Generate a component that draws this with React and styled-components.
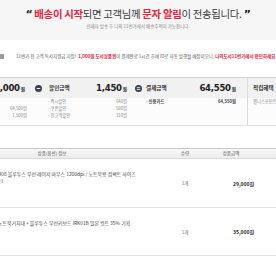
import React from "react";
import styled, { createGlobalStyle } from "styled-components";

const GlobalStyle = createGlobalStyle`
  html, body {
    margin: 0;
    padding: 0;
    background: #fff;
    overflow: hidden;
  }
  body {
    width: 276px;
    height: 260px;
    font-family: "Noto Sans CJK KR", "Noto Sans", sans-serif;
    color: #333;
  }
`;

const red = "#e4243c";
const navy = "#3b3f52";

const Banner = styled.div`
  height: 40px;
  box-sizing: border-box;
  padding-top: 8px;
  background: #f6f6f6;
  text-align: center;
  white-space: nowrap;
`;

const Headline = styled.p`
  margin: 0;
  font-size: 10.4px;
  line-height: 12px;
  letter-spacing: -0.3px;
  color: #3a3a3a;
`;

const Quote = styled.span`
  font-family: "DejaVu Sans", sans-serif;
  font-weight: 700;
  font-size: 11px;
  color: #222;
`;

const Red = styled.strong`
  color: ${red};
  font-weight: 700;
`;

const SubText = styled.p`
  margin: 2px 0 0;
  font-size: 4.5px;
  line-height: 6px;
  color: #888;
`;

const Page = styled.div`
  margin-left: -58px;
  width: 400px;
`;

const Notice = styled.div`
  margin-top: 12px;
  padding-left: 58px;
  display: flex;
  align-items: center;
  gap: 12px;
  height: 8px;
  font-size: 4.5px;
  line-height: 8px;
  color: #555;
  white-space: nowrap;
`;

const NoticeIcon = styled.span`
  width: 4px;
  height: 5px;
  background: #9a9a9a;
  border-radius: 0.5px;
`;

const Summary = styled.div`
  margin-top: 17px;
  display: grid;
  grid-template-columns: 90px 13px 87px 12px 103px 95px;
  grid-template-rows: 20px 27px;
  border-top: 1px solid #d4d4d4;
  border-bottom: 1px solid #e2e2e2;
`;

const Head = styled.div`
  background: #f1f1f1;
  display: flex;
  align-items: center;
  justify-content: ${({ $end }) => ($end ? "flex-end" : "space-between")};
  padding: 0 ${({ $pr = 0 }) => $pr}px 0 ${({ $pl = 0 }) => $pl}px;
  border-left: ${({ $divider }) => ($divider ? "1px solid #dcdcdc" : "none")};
`;

const IconCell = styled.div`
  background: #f1f1f1;
  display: flex;
  align-items: center;
  justify-content: center;
`;

const Label = styled.span`
  font-size: 5.6px;
  font-weight: 700;
  color: #333;
`;

const Amount = styled.span`
  font-family: "DejaVu Sans", sans-serif;
  font-weight: 700;
  font-size: 8.6px;
  letter-spacing: -0.3px;
  color: #222;
  small {
    font-family: "Noto Sans CJK KR", sans-serif;
    font-size: 4.6px;
    margin-left: 1px;
    letter-spacing: 0;
  }
`;

const Detail = styled.div`
  background: #fcfcfc;
  padding: 0 ${({ $pr = 0 }) => $pr}px 0 ${({ $pl = 0 }) => $pl}px;
  border-left: ${({ $divider }) => ($divider ? "1px solid #dcdcdc" : "none")};
`;

const DetailRow = styled.div`
  display: flex;
  justify-content: space-between;
  font-size: 4.3px;
  line-height: 7px;
  color: #888;
  white-space: nowrap;
  b {
    font-weight: 700;
    color: #444;
  }
`;

const Table = styled.div`
  margin-top: 22px;
`;

const TRow = styled.div`
  display: grid;
  grid-template-columns: 220px 46px 46px 88px;
  height: ${({ $h }) => $h}px;
  border-bottom: 1px solid #e4e4e4;
`;

const THead = styled(TRow)`
  border-top: 1px solid #c8c8c8;
  border-bottom-color: #d8d8d8;
  background: linear-gradient(#f8f8f8, #ececec);
`;

const Th = styled.div`
  font-size: 4.5px;
  line-height: 9px;
  color: #555;
  text-align: center;
`;

const ProductCell = styled.div`
  padding: 11px 0 0 38px;
  font-size: 4.9px;
  line-height: 7px;
  color: #444;
  white-space: nowrap;
`;

const Qty = styled.div`
  align-self: center;
  text-align: center;
  font-size: 4.5px;
  color: #666;
`;

const Price = styled.div`
  align-self: center;
  text-align: right;
  font-size: 5px;
  font-weight: 700;
  color: #222;
`;

function CircleIcon({ equals }) {
  return (
    <svg width="7" height="7" viewBox="0 0 14 14">
      <circle cx="7" cy="7" r="7" fill={navy} />
      {equals ? (
        <>
          <rect x="3.5" y="4.6" width="7" height="1.6" fill="#fff" />
          <rect x="3.5" y="7.8" width="7" height="1.6" fill="#fff" />
        </>
      ) : (
        <rect x="3.5" y="6.1" width="7" height="1.8" fill="#fff" />
      )}
    </svg>
  );
}

const products = [
  { name: "로지텍 M408 블루투스 무선 레이저 마우스 1200dpi / 노트북용 컴팩트 사이즈", option: "선택: 블랙 l", qty: "1개", price: "29,000원", h: 48 },
  { name: "[사은품] 노트북거치대 + 블루투스 무선키보드 IRK01B 밀본 컷트 35% 기획", qty: "1개", price: "35,000원", h: 47 },
];

export default function App() {
  return (
    <>
      <GlobalStyle />
      <Banner>
        <Headline>
          <Quote>“</Quote> <Red>배송이 시작</Red>되면 고객님께 <Red>문자 알림</Red>이 전송됩니다.{" "}
          <Quote>”</Quote>
        </Headline>
        <SubText>판매자 발송 후 나의 11번가에서 배송추적이 가능합니다.</SubText>
      </Banner>
      <Page>
        <Notice>
          <NoticeIcon />
          <span>
            11번가 전 고객 독서지원금 지원!&nbsp; <Red>1,000원 도서상품권</Red>이 결제완료 1시간 후에 ID로 자동 발행될
            예정이오니, <Red>나의도서11번가에서 확인하세요.</Red>
          </span>
        </Notice>

        <Summary>
          <Head $end $pr={7}>
            <Amount>
              66,000<small>원</small>
            </Amount>
          </Head>
          <IconCell>
            <CircleIcon />
          </IconCell>
          <Head $pl={4} $pr={5}>
            <Label>할인금액</Label>
            <Amount>
              1,450<small>원</small>
            </Amount>
          </Head>
          <IconCell>
            <CircleIcon equals />
          </IconCell>
          <Head $pl={2} $pr={11}>
            <Label>결제금액</Label>
            <Amount>
              64,550<small>원</small>
            </Amount>
          </Head>
          <Head $divider $pl={5}>
            <Label>적립혜택</Label>
          </Head>

          <Detail $pl={8} $pr={5}>
            <DetailRow>
              <span>&nbsp;</span>
            </DetailRow>
            <DetailRow>
              <span>- 상품금액</span>
              <span>64,500원</span>
            </DetailRow>
            <DetailRow>
              <span>- 배송비</span>
              <span>1,500원</span>
            </DetailRow>
          </Detail>
          <Detail />
          <Detail $pl={3} $pr={5}>
            <DetailRow>
              <span>- 즉시할인</span>
              <span>640원</span>
            </DetailRow>
            <DetailRow>
              <span>- 쿠폰할인</span>
              <span>500원</span>
            </DetailRow>
            <DetailRow>
              <span>- 전고객할인</span>
              <span>310원</span>
            </DetailRow>
          </Detail>
          <Detail />
          <Detail $pl={2} $pr={11}>
            <DetailRow>
              <b>- 신용카드</b>
              <b>64,550원</b>
            </DetailRow>
          </Detail>
          <Detail $divider $pl={5}>
            <DetailRow>
              <span>웰니스포인트 적립</span>
            </DetailRow>
          </Detail>
        </Summary>

        <Table>
          <THead $h={9}>
            <Th>상품(옵션) 정보</Th>
            <Th>수량</Th>
            <Th>상품금액</Th>
            <Th>배송비</Th>
          </THead>
          {products.map((p) => (
            <TRow key={p.price} $h={p.h}>
              <ProductCell>
                <div>{p.name}</div>
                {p.option && <div>{p.option}</div>}
              </ProductCell>
              <Qty>{p.qty}</Qty>
              <Price>{p.price}</Price>
              <div />
            </TRow>
          ))}
        </Table>
      </Page>
    </>
  );
}
